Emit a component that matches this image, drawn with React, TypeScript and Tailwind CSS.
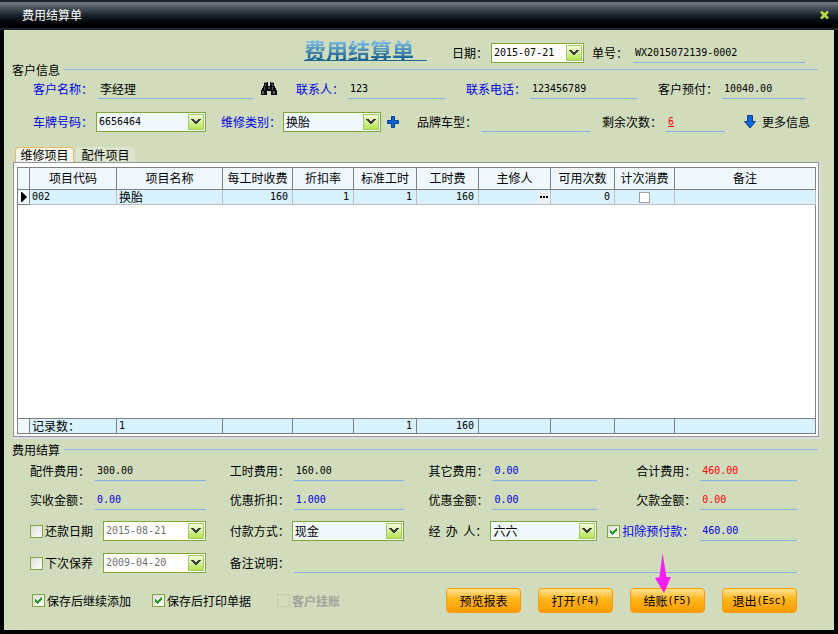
import React, { useState } from 'react';

const MONO = "font-['DejaVu_Sans_Mono','Noto_Sans_CJK_SC',monospace] text-[10px]";

interface FieldProps {
  label: string;
  value: string;
  name?: string;
  labelClass?: string;
  inputClass?: string;
  cjk?: boolean;
}

/**
 * Label followed by an underlined text box
 */
const Field: React.FC<FieldProps> = ({ label, value, name, labelClass = '', inputClass = '', cjk = false }) => {
  const id = React.useId();
  return (
    <>
      {label && <label htmlFor={id} className={`shrink-0 whitespace-nowrap leading-5 ${labelClass}`}>{label}</label>}
      <input
        id={id}
        type="text"
        aria-label={name}
        defaultValue={value}
        className={`h-5 min-w-0 border-b border-[#84b2ee] bg-transparent px-0.5 outline-none ${cjk ? 'text-xs' : MONO} ${inputClass}`}
      />
    </>
  );
};

interface PickerProps {
  label: string;
  value: string;
  name?: string;
  labelClass?: string;
  boxClass?: string;
  textClass?: string;
  cjk?: boolean;
}

/**
 * Drop-down with the green arrow button
 */
const Picker: React.FC<PickerProps> = ({
  label,
  value,
  name,
  labelClass = '',
  boxClass = 'flex-1',
  textClass = 'bg-[#f0f8ff] text-black',
  cjk = false
}) => {
  const id = React.useId();
  return (
    <>
      {label && <label htmlFor={id} className={`shrink-0 whitespace-pre leading-5 ${labelClass}`}>{label}</label>}
      <div className={`relative h-5 min-w-0 ${boxClass}`}>
        <select
          id={id}
          aria-label={name}
          defaultValue={value}
          className={`block h-5 w-full appearance-none border border-[#80a93a] pl-0.5 outline-none ${cjk ? 'text-xs leading-4' : MONO} ${textClass}`}
        >
          <option value={value}>{value}</option>
        </select>
        <DropArrow />
      </div>
    </>
  );
};

const DropArrow = () => (
  <span className="pointer-events-none absolute top-0.5 right-0.5 flex h-4 w-4 items-center justify-center border border-[#a5c96c] bg-gradient-to-b from-[#f4fbd8] to-[#b4e647]">
    <svg width="10" height="6" viewBox="0 0 10 6" shapeRendering="crispEdges" aria-hidden="true">
      <path d="M0 0h3v1h1v1h2v-1h1v-1h3v1h-1v1h-1v1h-1v1h-1v1h-2v-1h-1v-1h-1v-1h-1v-1h-1z" fill="#3c3c3c" />
    </svg>
  </span>
);

interface CheckProps {
  label: string;
  checked?: boolean;
  disabled?: boolean;
  className?: string;
}

const Check: React.FC<CheckProps> = ({ label, checked = false, disabled = false, className = '' }) => {
  const [on, setOn] = useState(checked);
  return (
    <label className={`flex shrink-0 items-center gap-0.5 whitespace-nowrap leading-5 ${className}`}>
      <span className="relative h-[13px] w-[13px]">
        <input
          type="checkbox"
          checked={on}
          disabled={disabled}
          onChange={(e) => setOn(e.target.checked)}
          className="block h-[13px] w-[13px] appearance-none border border-[#80a93a] bg-gradient-to-br from-[#dcdcd8] to-white disabled:border-[#c3cba8] disabled:bg-none"
        />
        {on && (
          <svg className="pointer-events-none absolute top-[3px] left-[3px]" width="7" height="7" viewBox="0 0 7 7" shapeRendering="crispEdges" aria-hidden="true">
            <path d="M0 2h1v1h1v1h1v-1h1v-1h1v-1h1v-1h1v3h-1v1h-1v1h-1v1h-1v1h-1v-1h-1v-1h-1z" fill="#21a121" />
          </svg>
        )}
      </span>
      {label}
    </label>
  );
};

const Legend = ({ text }: { text: string }) => (
  <div className="flex h-[13px] items-center gap-1 pr-4 pl-2">
    <h2 className="leading-[13px]">{text}</h2>
    <div className="h-px flex-1 bg-[#92badf]" />
  </div>
);

const ActionButton = ({ text, hotkey }: { text: string; hotkey?: string }) => (
  <button
    type="button"
    className="flex h-[25px] w-[75px] items-center justify-center rounded border border-[#ff9c08] bg-gradient-to-b from-[#ffe48a] via-[#ffb81c] via-40% to-[#ff9c00] leading-4"
  >
    {text}
    {hotkey && <span className={MONO}>{hotkey}</span>}
  </button>
);

const headers = ['项目代码', '项目名称', '每工时收费', '折扣率', '标准工时', '工时费', '主修人', '可用次数', '计次消费', '备注'];

const cell = 'border-r border-b border-[#c0c0c0] bg-[#d9f2ff] px-0.5';
const headCell = 'border-r border-b border-[#808080] bg-[#f0f8ff]';
const footCell = 'border-r border-b border-[#808080] bg-[#d9f2ff] px-0.5';

const ItemTable = () => (
  <table className="w-full table-fixed border-separate border-spacing-0 border-t border-l border-[#808080] leading-[14px]">
    <colgroup>
      <col className="w-[12px]" />
      <col className="w-[87px]" />
      <col className="w-[106px]" />
      <col className="w-[70px]" />
      <col className="w-[61px]" />
      <col className="w-[63px]" />
      <col className="w-[62px]" />
      <col className="w-[72px]" />
      <col className="w-[64px]" />
      <col className="w-[60px]" />
      <col />
    </colgroup>
    <thead>
      <tr className="h-[22px]">
        <td className={headCell} />
        {headers.map((h) => (
          <th key={h} className={`${headCell} pb-0.5 text-center font-normal whitespace-nowrap`}>{h}</th>
        ))}
      </tr>
    </thead>
    <tbody>
      <tr className="h-[15px]">
        <td className={headCell}>
          <svg className="mx-auto block" width="6" height="10" viewBox="0 0 6 10" aria-hidden="true">
            <path d="M0 0h1L6 5L1 10h-1z" fill="#000" />
          </svg>
        </td>
        <td className={`${cell} ${MONO}`}>002</td>
        <td className={cell}>换胎</td>
        <td className={`${cell} ${MONO} pr-1 text-right`}>160</td>
        <td className={`${cell} ${MONO} pr-1 text-right`}>1</td>
        <td className={`${cell} ${MONO} pr-1 text-right`}>1</td>
        <td className={`${cell} ${MONO} pr-1 text-right`}>160</td>
        <td className={`${cell} pr-0`}>
          <button type="button" aria-label="选择主修人" className="ml-auto flex h-3 w-3 items-center justify-center gap-px bg-[#f0f0f0]">
            <span className="h-0.5 w-0.5 bg-black" />
            <span className="h-0.5 w-0.5 bg-black" />
            <span className="h-0.5 w-0.5 bg-black" />
          </button>
        </td>
        <td className={`${cell} ${MONO} pr-1 text-right`}>0</td>
        <td className={cell}>
          <input type="checkbox" aria-label="计次消费" className="mx-auto block h-[11px] w-[11px] appearance-none border border-[#a0a0a0] bg-white" />
        </td>
        <td className={cell} />
      </tr>
      <tr>
        <td colSpan={11} className="h-[calc(100vh-420px)] border-r border-b border-[#808080] bg-white" />
      </tr>
    </tbody>
    <tfoot>
      <tr className="h-[15px]">
        <td className={headCell} />
        <td className={footCell}>记录数：</td>
        <td className={`${footCell} ${MONO}`}>1</td>
        <td className={footCell} />
        <td className={footCell} />
        <td className={`${footCell} ${MONO} pr-1 text-right`}>1</td>
        <td className={`${footCell} ${MONO} pr-1 text-right`}>160</td>
        <td className={footCell} />
        <td className={footCell} />
        <td className={footCell} />
        <td className={footCell} />
      </tr>
    </tfoot>
  </table>
);

const Binoculars = () => (
  <svg width="16" height="14" viewBox="0 0 16 14" shapeRendering="crispEdges" aria-hidden="true">
    <path d="M3 0h4v4h2v-4h4v4h1v2h1v2h1v5h-6v-4h-4v4h-6v-5h1v-2h1v-2h1z" fill="#0c0c0c" />
    <path d="M3 0h3v1h-3zM10 0h3v1h-3z" fill="#8a8a8a" />
    <path d="M4 2h1v2h-1zM11 2h1v2h-1zM3 5h1v3h-1zM11 5h1v3h-1zM7 5h2v2h-2zM1 9h2v3h-2zM12 9h2v3h-2z" fill="#5c5c5c" />
  </svg>
);

const App: React.FC = () => {
  const [tab, setTab] = useState(0);

  return (
    <div className="flex min-h-screen flex-col bg-black font-['Noto_Sans_CJK_SC',sans-serif] text-xs text-black">
      <header className="flex h-[30px] items-center justify-between border-t-2 border-b-2 border-[#1b2530] bg-gradient-to-b from-[#747b82] via-[#1c2630] via-50% to-black pr-2 pl-[22px]">
        <h1 className="text-white">费用结算单</h1>
        <button type="button" aria-label="关闭" className="flex h-4 w-3 items-center justify-center">
          <svg width="9" height="8" viewBox="0 0 9 8" aria-hidden="true">
            <path d="M1 0.5L8 7.5M8 0.5L1 7.5" stroke="#b4df46" strokeWidth="2.6" />
          </svg>
        </button>
      </header>

      <main className="mx-1 mb-1 flex-1 bg-[#d0dcbc]">
        <div className="flex h-[33px] items-end pr-[29px]">
          <div className="flex flex-1 justify-end pr-[25px] pb-0.5">
            <div className="w-[123px] border-b border-[#1c6a94]">
              <span className="block bg-gradient-to-b from-[#8fd0f2] to-[#0f5f8c] bg-clip-text text-[22px] leading-[22px] font-bold text-transparent">费用结算单</span>
            </div>
          </div>
          <Picker label="日期：" value="2015-07-21" labelClass="w-[39px]" boxClass="w-[93px]" textClass="bg-white text-black" />
          <Field label="单号：" value="WX2015072139-0002" labelClass="ml-2 w-[41px]" inputClass="w-[172px]" />
        </div>

        <Legend text="客户信息" />

        <div className="mt-[3px] flex items-center pr-[29px] pl-[29px]">
          <Field label="客户名称：" value="李经理" cjk labelClass="w-[65px] text-[#0000e6]" inputClass="flex-[151_1_0px]" />
          <button type="button" aria-label="查找客户" className="mr-[19px] ml-2 shrink-0"><Binoculars /></button>
          <Field label="联系人：" value="123" labelClass="w-[52px] text-[#0000e6]" inputClass="flex-[93_1_0px]" />
          <Field label="联系电话：" value="123456789" labelClass="ml-[21px] w-[64px] text-[#0000e6]" inputClass="flex-[103_1_0px]" />
          <Field label="客户预付：" value="10040.00" labelClass="ml-[21px] w-[64px]" inputClass="flex-[79_1_0px]" />
        </div>

        <div className="mt-[13px] flex items-center pr-6 pl-[29px]">
          <Picker label="车牌号码：" value="6656464" labelClass="w-[63px] text-[#0000e6]" boxClass="flex-[110_1_0px]" />
          <Picker label="维修类别：" value="换胎" cjk labelClass="ml-[15px] w-[62px] text-[#0000e6]" boxClass="flex-[98_1_0px]" />
          <button type="button" aria-label="新增维修类别" className="mr-[18px] ml-1.5 shrink-0">
            <svg width="12" height="12" viewBox="0 0 12 12" aria-hidden="true">
              <path d="M4.500 0.500h3v4h4v3h-4v4h-3v-4h-4v-3h4z" fill="#0868d8" stroke="#0a3c8c" />
            </svg>
          </button>
          <Field label="品牌车型：" value="" labelClass="w-[64px]" inputClass="flex-[105_1_0px]" />
          <Field label="剩余次数：" value="6" labelClass="ml-3 w-[64px]" inputClass="flex-[55_1_0px] text-[#f00] underline" />
          <button type="button" className="ml-[19px] flex shrink-0 items-center gap-1.5 leading-5">
            <svg width="12" height="14" viewBox="0 0 12 14" aria-hidden="true">
              <path d="M3.500 0.500h5v6h3L6 13L0.500 6.500h3z" fill="#0868d8" stroke="#0a3c8c" />
            </svg>
            更多信息
          </button>
        </div>

        <div className="mt-[15px] flex gap-0.5 pl-[11px]" role="tablist">
          {['维修项目', '配件项目'].map((name, i) => (
            <button
              key={name}
              type="button"
              role="tab"
              aria-selected={tab === i}
              onClick={() => setTab(i)}
              className={`flex h-[15px] w-[59px] items-center justify-center rounded-t border-t leading-3 ${tab === i ? 'border-x border-[#f2b866] bg-[#f4f6ee]' : 'border-[#dce4cc] bg-[#dce4cc]'}`}
            >
              {name}
            </button>
          ))}
        </div>

        <div className="mr-[15px] ml-[9px] border border-[#8c979c] bg-white pt-1 pr-0.5 pb-0.5 pl-[3px] shadow-[1px_1px_0_1px_#dcdcdc]">
          <ItemTable />
        </div>

        <div className="pt-1.5">
          <Legend text="费用结算" />
        </div>

        <div className="mt-[5px] grid grid-cols-[minmax(0,200fr)_minmax(0,199fr)_minmax(0,179fr)_minmax(0,190fr)] gap-y-[9px] pr-[37px] pl-[26px]">
          <div className="flex pr-6">
            <Field label="配件费用：" value="300.00" labelClass="w-[65px]" inputClass="flex-1" />
          </div>
          <div className="flex pr-6">
            <Field label="工时费用：" value="160.00" labelClass="w-[64px]" inputClass="flex-1" />
          </div>
          <div className="flex pr-2.5">
            <Field label="其它费用：" value="0.00" labelClass="w-[64px]" inputClass="flex-1 text-[#0000e6]" />
          </div>
          <div className="flex">
            <Field label="合计费用：" value="460.00" labelClass="w-[93px] pl-[29px]" inputClass="flex-1 text-[#f00]" />
          </div>

          <div className="flex pr-6">
            <Field label="实收金额：" value="0.00" labelClass="w-[65px]" inputClass="flex-1 text-[#0000e6]" />
          </div>
          <div className="flex pr-6">
            <Field label="优惠折扣：" value="1.000" labelClass="w-[64px]" inputClass="flex-1 text-[#0000e6]" />
          </div>
          <div className="flex pr-2.5">
            <Field label="优惠金额：" value="0.00" labelClass="w-[64px]" inputClass="flex-1 text-[#0000e6]" />
          </div>
          <div className="flex">
            <Field label="欠款金额：" value="0.00" labelClass="w-[93px] pl-[29px]" inputClass="flex-1 text-[#f00]" />
          </div>
        </div>

        <div className="mt-[11px] grid grid-cols-[minmax(0,200fr)_minmax(0,199fr)_minmax(0,179fr)_minmax(0,190fr)] gap-y-3 pr-[37px] pl-[26px]">
          <div className="flex pr-6">
            <Check label="还款日期" className="w-[73px]" />
            <Picker label="" name="还款日期" value="2015-08-21" textClass="bg-white text-[#707070]" />
          </div>
          <div className="flex pr-6">
            <Picker label="付款方式：" value="现金" cjk labelClass="w-[62px]" />
          </div>
          <div className="flex pr-2.5">
            <Picker label="经  办  人：" value="六六" cjk labelClass="w-[62px]" />
          </div>
          <div className="flex">
            <Check label="扣除预付款：" checked className="w-[93px] text-[#0000e6]" />
            <Field label="" name="扣除预付款" value="460.00" inputClass="flex-1 text-[#0000e6]" />
          </div>

          <div className="flex pr-6">
            <Check label="下次保养" className="w-[73px]" />
            <Picker label="" name="下次保养" value="2009-04-20" textClass="bg-white text-[#707070]" />
          </div>
          <div className="col-span-3 flex">
            <Field label="备注说明：" value="" cjk labelClass="w-[64px]" inputClass="flex-1" />
          </div>
        </div>

        <div className="mt-[15px] flex items-center justify-between pr-[37px] pb-[17px] pl-7">
          <div className="flex">
            <Check label="保存后继续添加" checked className="w-[120px]" />
            <Check label="保存后打印单据" checked className="w-[125px]" />
            <Check label="客户挂账" disabled className="font-bold text-[#a0a49a]" />
          </div>
          <div className="flex gap-[17px]">
            <ActionButton text="预览报表" />
            <ActionButton text="打开" hotkey="(F4)" />
            <div className="relative">
              <ActionButton text="结账" hotkey="(F5)" />
              <svg className="pointer-events-none absolute -top-[35px] left-[25px]" width="16" height="40" viewBox="0 0 16 40" aria-hidden="true">
                <path d="M7.500 0L11.500 24H16L9 40L0 25L4.500 24z" fill="#f81cf8" />
              </svg>
            </div>
            <ActionButton text="退出" hotkey="(Esc)" />
          </div>
        </div>
      </main>
    </div>
  );
};

export default App;
